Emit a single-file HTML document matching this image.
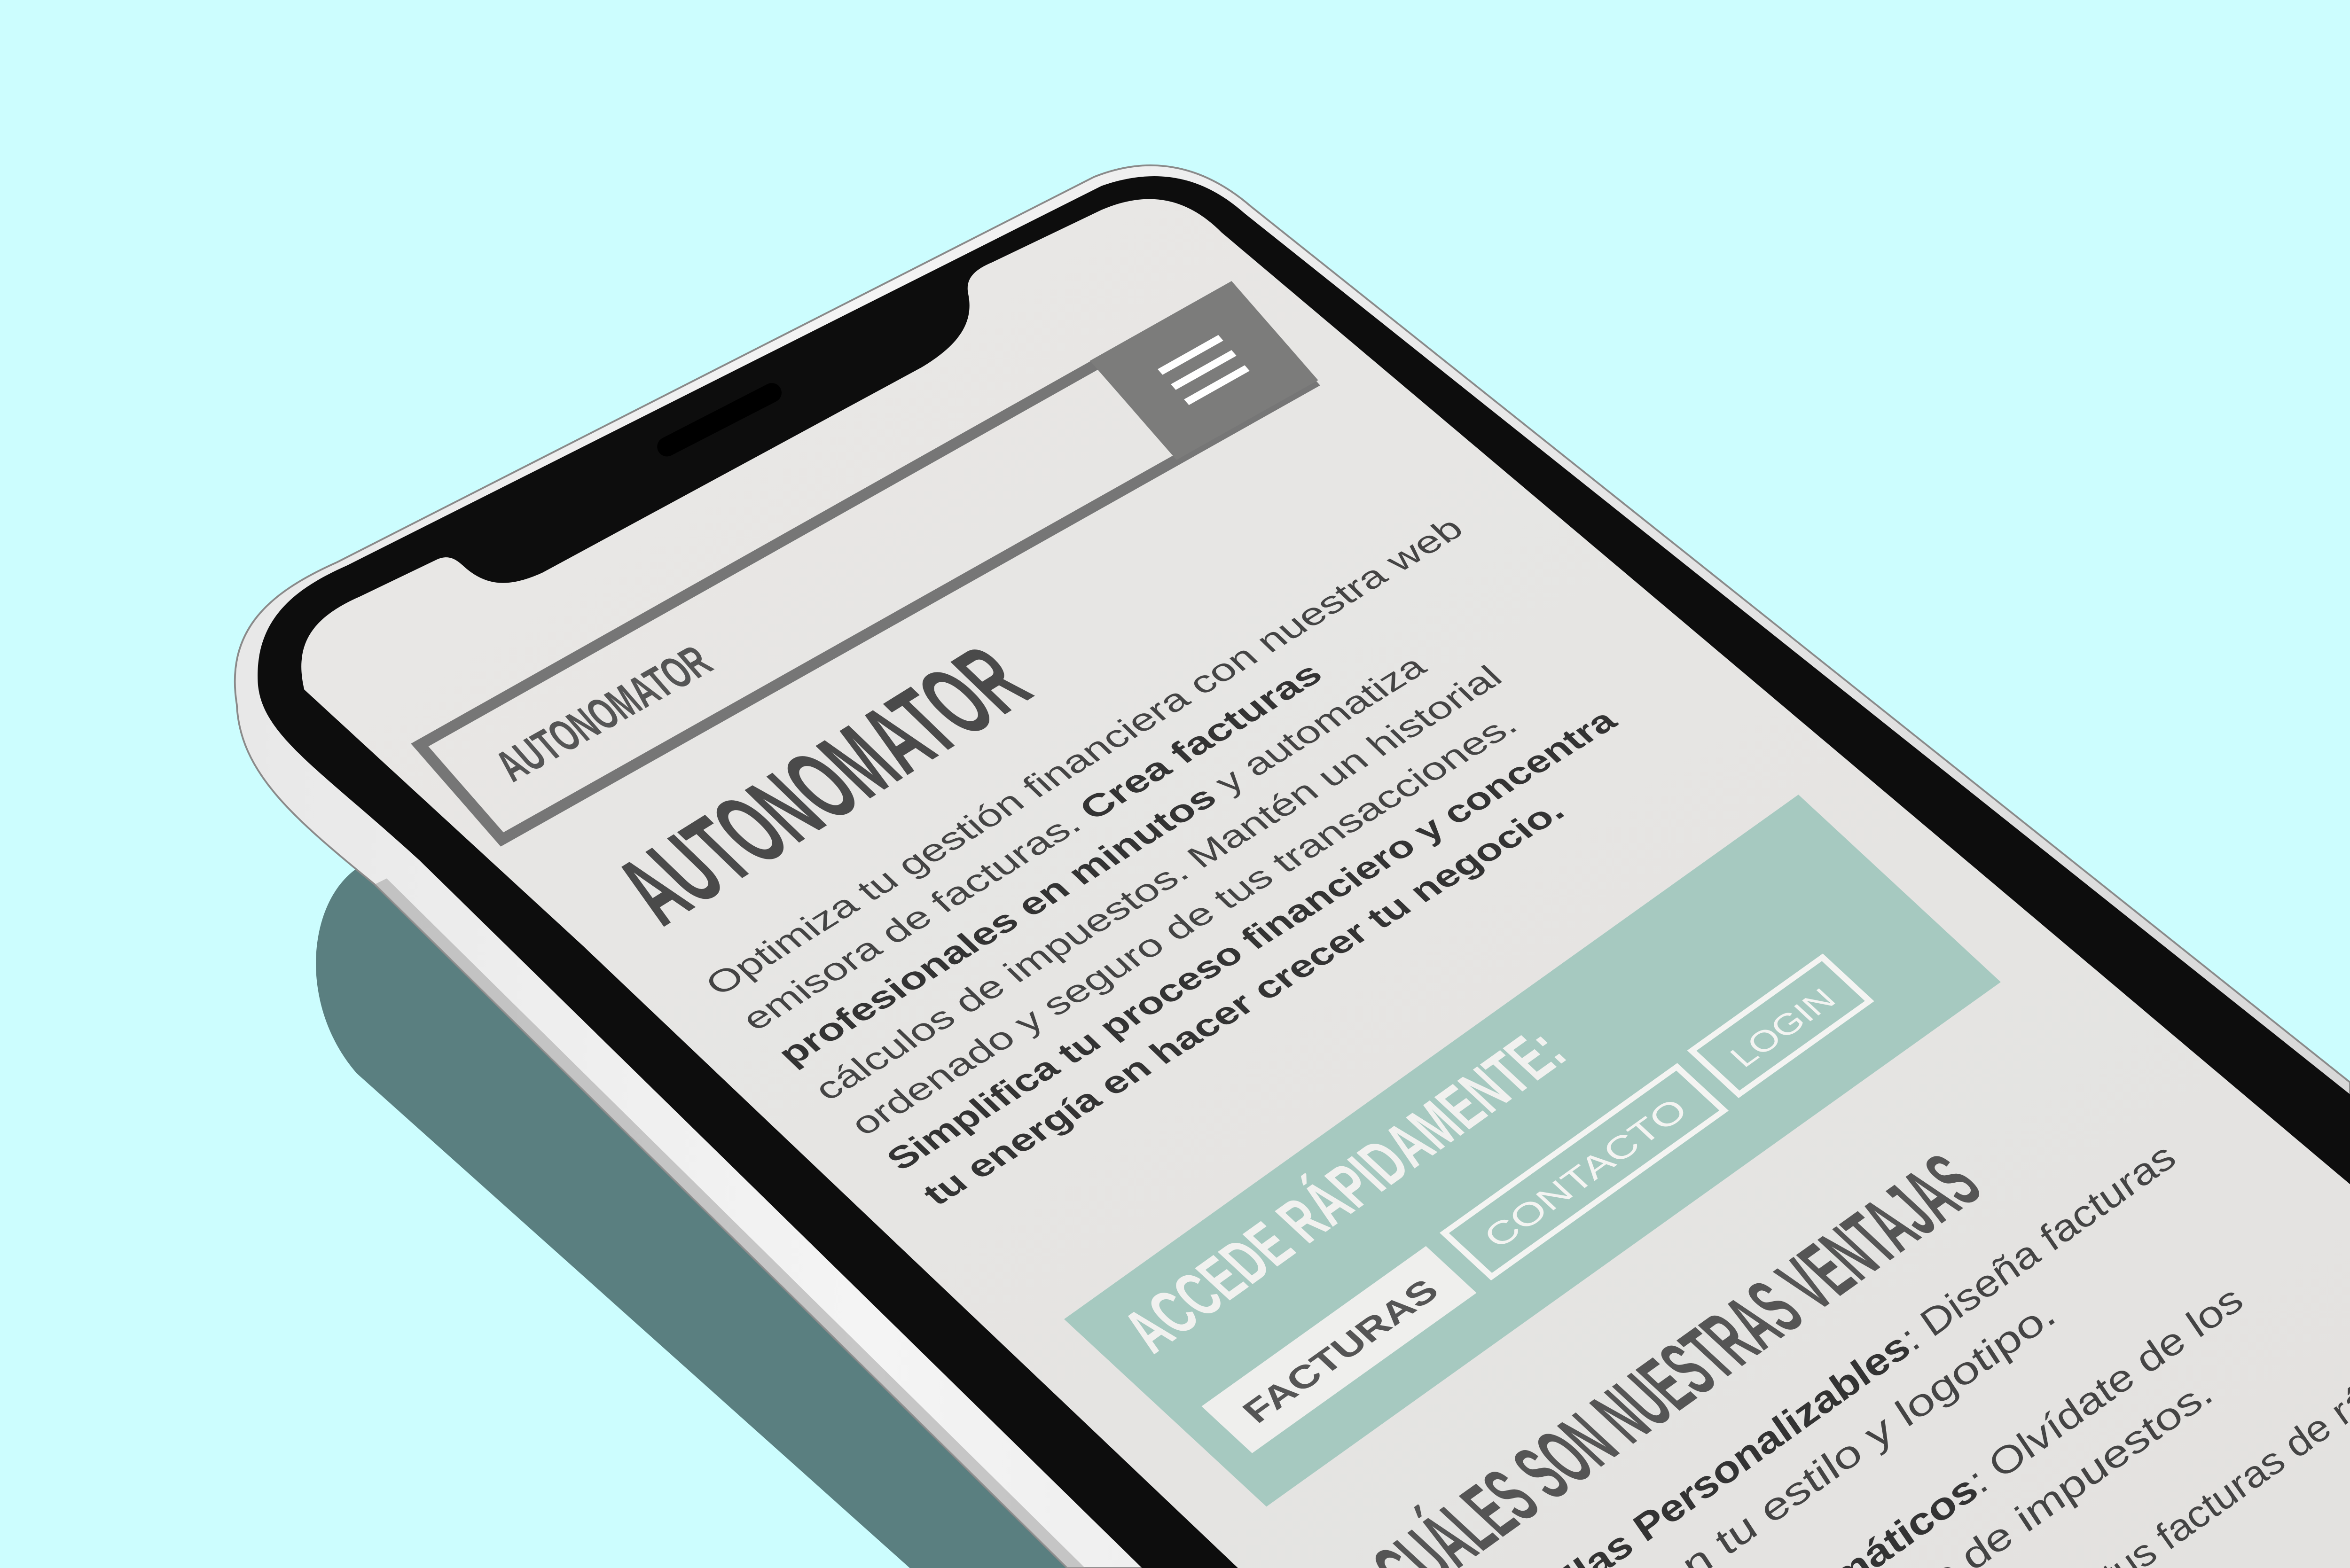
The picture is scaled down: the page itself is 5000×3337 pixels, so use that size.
<!DOCTYPE html>
<html><head><meta charset="utf-8"><style>
html,body{margin:0;padding:0;background:#ccfdfe;overflow:hidden;}
svg{display:block;}
.n{font-family:"Liberation Sans Narrow","Liberation Sans",sans-serif;font-weight:bold;}
.s{font-family:"Liberation Sans",sans-serif;}
</style></head><body>
<svg width="5000" height="3337" viewBox="0 0 1568 1046" preserveAspectRatio="none" xmlns="http://www.w3.org/2000/svg">
<defs>
<linearGradient id="sil" x1="0" y1="0" x2="1" y2="0">
<stop offset="0" stop-color="#e8e8e8"/><stop offset="0.3" stop-color="#f4f4f4"/><stop offset="1" stop-color="#d8d8d8"/>
</linearGradient>
<linearGradient id="scr" x1="0" y1="0" x2="1" y2="1">
<stop offset="0" stop-color="#e9e8e6"/><stop offset="1" stop-color="#e3e2e0"/>
</linearGradient>
<clipPath id="screen">
<path d="M 203,460 C 196,430 208,412 240,398 L 292,373 C 302,369 307,376 312,380 C 327,392 342,391 362,382 L 615,245 C 640,230 650,215 646,196 C 644,186 650,180 662,175 L 735,140 C 770,125 795,135 815,155 L 1568,790 L 1568,1046 L 826,1046 L 389,631 Z"/>
</clipPath>
</defs>
<rect width="1568" height="1046" fill="#ccfdfe"/>
<!-- shadow -->
<path d="M 240,578 C 205,600 198,670 238,716 L 607,1046 L 735,1046 L 257,591 Z" fill="#5a7f80"/>
<!-- silver body -->
<path d="M 158,470 C 150,420 180,395 225,375 L 730,118 C 770,102 805,112 835,138 L 1568,722 L 1568,1046 L 712,1046 L 250,590 C 195,545 160,515 158,470 Z" fill="url(#sil)" stroke="#8a8a8a" stroke-width="1.2"/>
<path d="M 250,590 L 712,1046 L 724,1046 L 258,586 Z" fill="#9a9a9a" opacity="0.5"/>
<!-- black bezel -->
<path d="M 172,455 C 170,412 198,392 232,377 L 735,124 C 775,110 805,120 830,142 L 1568,730 L 1568,1046 L 762,1046 L 280,574 C 212,512 174,490 172,455 Z" fill="#0d0d0d"/>
<!-- screen -->
<path d="M 203,460 C 196,430 208,412 240,398 L 292,373 C 302,369 307,376 312,380 C 327,392 342,391 362,382 L 615,245 C 640,230 650,215 646,196 C 644,186 650,180 662,175 L 735,140 C 770,125 795,135 815,155 L 1568,790 L 1568,1046 L 826,1046 L 389,631 Z" fill="url(#scr)"/>
<!-- earpiece -->
<line x1="445" y1="298" x2="515" y2="262" stroke="#000" stroke-width="13" stroke-linecap="round"/>
<g clip-path="url(#screen)">
 <!-- header -->
 <g transform="matrix(1.5,-0.844,1.1,1.26,280,497)">
  <rect x="0" y="0" width="360" height="50" fill="none" stroke="#767676" stroke-width="4.5"/>
  <rect x="300" y="-2.5" width="63" height="52.5" fill="#7c7c7b"/>
  <rect x="318" y="14" width="27" height="3" fill="#fff"/>
  <rect x="318" y="22" width="27" height="3" fill="#fff"/>
  <rect x="318" y="30" width="27" height="3" fill="#fff"/>
  <text class="n" x="18" y="32" font-size="19" textLength="90" lengthAdjust="spacingAndGlyphs" fill="#555">AUTONOMATOR</text>
 </g>
 <!-- hero -->
 <g transform="matrix(1.556,-0.969,1.1,1.06,480,665)" fill="#444">
  <text class="n" x="4" y="-40" font-size="48" textLength="160" lengthAdjust="spacingAndGlyphs" fill="#4a4a4a">AUTONOMATOR</text>
  <text class="s" x="0" y="0" font-size="15" textLength="320" lengthAdjust="spacingAndGlyphs">Optimiza tu gestión financiera con nuestra web</text>
  <text class="s" x="0" y="22" font-size="15" textLength="244" lengthAdjust="spacingAndGlyphs">emisora de facturas. <tspan font-weight="bold" fill="#333">Crea facturas</tspan></text>
  <text class="s" x="0" y="44" font-size="15" textLength="273" lengthAdjust="spacingAndGlyphs"><tspan font-weight="bold" fill="#333">profesionales en minutos</tspan> y automatiza</text>
  <text class="s" x="0" y="66" font-size="15" textLength="290" lengthAdjust="spacingAndGlyphs">cálculos de impuestos. Mantén un historial</text>
  <text class="s" x="0" y="88" font-size="15" textLength="281" lengthAdjust="spacingAndGlyphs">ordenado y seguro de tus transacciones.</text>
  <text class="s" x="0" y="110" font-size="15" font-weight="bold" fill="#333" textLength="308" lengthAdjust="spacingAndGlyphs">Simplifica tu proceso financiero y concentra</text>
  <text class="s" x="0" y="132" font-size="15" font-weight="bold" fill="#333" textLength="270" lengthAdjust="spacingAndGlyphs">tu energía en hacer crecer tu negocio.</text>
 </g>
 <!-- quick access -->
 <g transform="matrix(1.361,-0.972,1.125,1.042,710,880)">
  <rect x="0" y="0" width="360" height="120" fill="#a6c9c0"/>
  <text class="n" x="14" y="36" font-size="30" textLength="204" lengthAdjust="spacingAndGlyphs" fill="#f1f1ef">ACCEDE RÁPIDAMENTE:</text>
  <rect x="12" y="67" width="110" height="30" fill="#efefed"/>
  <text class="s" x="22" y="88" font-size="15" font-weight="bold" textLength="90" lengthAdjust="spacingAndGlyphs" fill="#555">FACTURAS</text>
  <rect x="131" y="67" width="114" height="28" fill="none" stroke="#f4f4f2" stroke-width="2.5"/>
  <text class="s" x="141" y="87" font-size="15" textLength="94" lengthAdjust="spacingAndGlyphs" fill="#f4f4f2">CONTACTO</text>
  <rect x="254" y="65" width="64" height="28" fill="none" stroke="#f4f4f2" stroke-width="2.5"/>
  <text class="s" x="263" y="85" font-size="14" textLength="46" lengthAdjust="spacingAndGlyphs" fill="#f4f4f2">LOGIN</text>
  <text class="n" x="2" y="192" font-size="38" textLength="291" lengthAdjust="spacingAndGlyphs" fill="#555">¿CUÁLES SON NUESTRAS VENTAJAS</text>
  <g class="s" font-size="17" font-style="italic" fill="#444">
   <text x="14" y="231" textLength="342" lengthAdjust="spacingAndGlyphs"><tspan font-weight="bold" fill="#333">Plantillas Personalizables</tspan>: Diseña facturas</text>
   <text x="14" y="257" textLength="262" lengthAdjust="spacingAndGlyphs">únicas con tu estilo y logotipo.</text>
   <text x="14" y="300" textLength="318" lengthAdjust="spacingAndGlyphs"><tspan font-weight="bold" fill="#333">Cálculos Automáticos</tspan>: Olvídate de los</text>
   <text x="14" y="326" textLength="282" lengthAdjust="spacingAndGlyphs">cálculos manuales de impuestos.</text>
   <text x="14" y="369" textLength="400" lengthAdjust="spacingAndGlyphs"><tspan font-weight="bold" fill="#333">Envío Instantáneo</tspan>: Envía tus facturas de rápidamente</text>
  </g>
 </g>
</g>
</svg>
</body></html>
